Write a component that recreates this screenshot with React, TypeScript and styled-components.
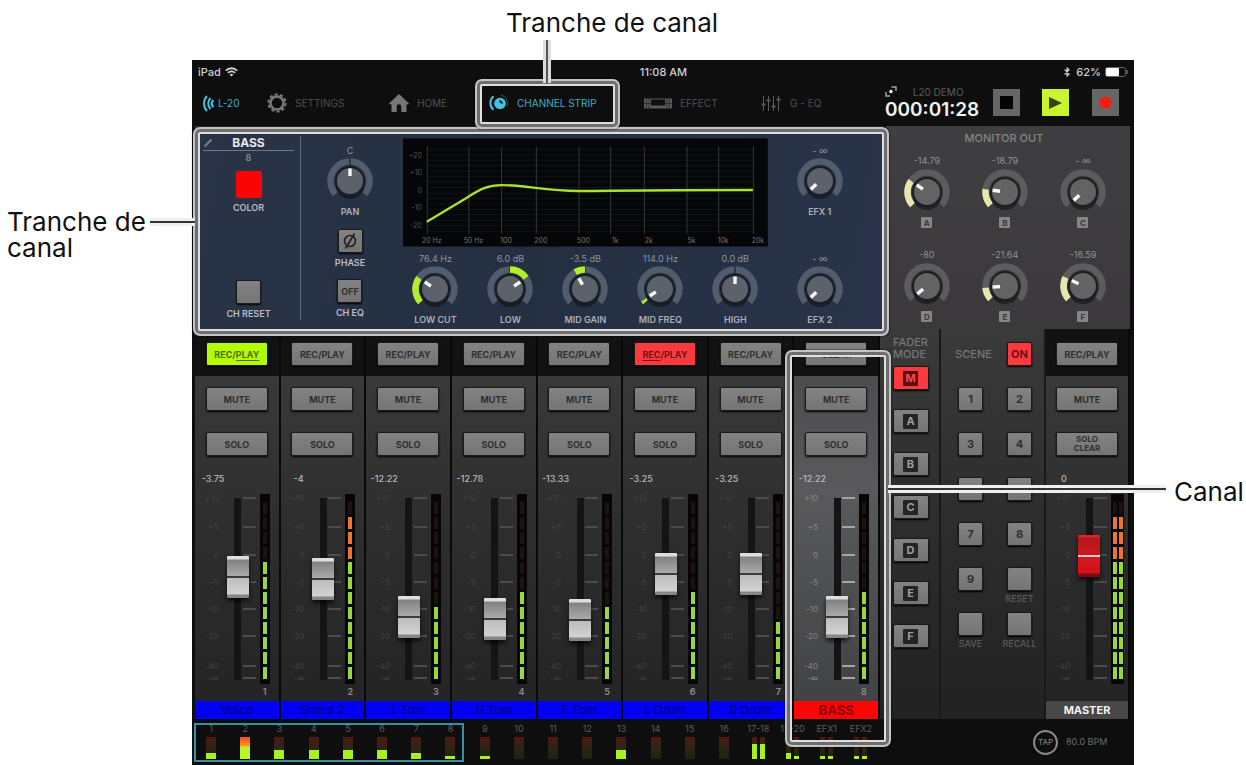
import React, { useState } from "react";
import styled, { createGlobalStyle, css } from "styled-components";
import { Bluetooth } from "lucide-react";

const Global = createGlobalStyle`
  *, *::before, *::after { box-sizing: border-box; }
  body { margin: 0; background: #fff; font-family: Inter, "Liberation Sans", sans-serif; }
  button, input { font-family: inherit; margin: 0; padding: 0; }
  p, h1, h2, h3, figure { margin: 0; font-weight: inherit; font-size: inherit; }
`;

/* ---------- figure with captions ---------- */

const Figure = styled.figure`
  display: grid;
  grid-template-columns: 192px minmax(0, 1fr) 112px;
  grid-template-rows: 60px auto;
  color: #111;
  overflow: hidden;
`;
const Caption = styled.p`
  font-size: 26px;
  line-height: 26px;
`;
const TopCaption = styled(Caption)`
  grid-column: 2;
  padding: 10px 0 0 314px;
  white-space: nowrap;
`;
const LeftCaption = styled(Caption)`
  grid-column: 1;
  grid-row: 2;
  padding: 149px 0 0 7px;
`;
const RightCaption = styled(Caption)`
  grid-column: 3;
  grid-row: 2;
  padding: 419px 0 0 40px;
`;

const Highlight = styled.span<{ $inset: string }>`
  position: absolute;
  inset: ${(p) => p.$inset};
  border: 2px solid #c4c4c4;
  border-radius: 7px;
  box-shadow: inset 0 0 0 3px #6e6e6e, inset 0 0 0 5px #dedede, 0 0 2px #000;
  pointer-events: none;
  z-index: 3;
`;
const Leader = styled.span<{ $inset: string; $vertical?: boolean }>`
  position: absolute;
  inset: ${(p) => p.$inset};
  ${(p) =>
    p.$vertical
      ? css`
          width: 8px;
          background: linear-gradient(90deg, #dcdcdc 3px, #555 3px 5px, #dcdcdc 5px);
        `
      : css`
          height: 8px;
          background: linear-gradient(#f0f0f0 3px, #333 3px 5px, #f0f0f0 5px);
        `}
  z-index: 4;
`;

/* ---------- tablet ---------- */

const Tablet = styled.div`
  grid-column: 2;
  grid-row: 2;
  background: #0e0e0f;
  color: #8a8a8a;
  font-size: 10px;
  line-height: 12px;
`;
const StatusBar = styled.div`
  display: grid;
  grid-template-columns: 1fr auto 1fr;
  align-items: center;
  height: 23px;
  padding: 0 5px 0 6px;
  font-size: 11px;
  font-weight: 500;
  color: #d0d0d0;
`;
const StatusGroup = styled.div<{ $end?: boolean }>`
  display: flex;
  align-items: center;
  gap: 4px;
  justify-content: ${(p) => (p.$end ? "flex-end" : "flex-start")};
`;
const Nav = styled.nav`
  display: grid;
  grid-template-columns: 64fr 122fr 100fr 155fr 116fr 125fr 108fr 49fr 50fr 42fr;
  align-items: center;
  height: 43px;
  padding-left: 11px;
`;
const NavLink = styled.a<{ $active?: boolean; $dim?: boolean }>`
  position: relative;
  display: flex;
  align-items: center;
  gap: 8px;
  height: 38px;
  padding-bottom: 3px;
  font-size: 10px;
  text-decoration: none;
  white-space: nowrap;
  color: ${(p) => (p.$active ? "#3fb0c8" : "#505050")};
  svg { color: ${(p) => (p.$active ? "#46c3dc" : p.$dim ? "#5a5a5a" : "#777")}; }
`;
const HomeLinkNear = styled(NavLink)`
  gap: 4px;
`;
const Clock = styled.div`
  display: grid;
  grid-template-columns: auto auto;
  justify-content: space-between;
  align-items: center;
  row-gap: 2px;
  width: 94px;
  padding-bottom: 4px;
  font-size: 10px;
  color: #5c5c5c;
`;
const Time = styled.strong`
  grid-column: 1 / 3;
  font-size: 19px;
  line-height: 20px;
  font-weight: 600;
  color: #f2f2f2;
`;
const Transport = styled.button<{ $lit?: boolean }>`
  display: flex;
  align-items: center;
  justify-content: center;
  width: 27px;
  height: 27px;
  margin-bottom: 4px;
  border: 0;
  background: ${(p) => (p.$lit ? "#c8f52f" : "#666")};
`;

/* ---------- shared controls ---------- */

type Tone = "grey" | "lime" | "red";
const tones: Record<Tone, string> = {
  grey: "linear-gradient(#838383, #747474)",
  lime: "#b4fb07",
  red: "#fb3a40",
};
const PadButton = styled.button<{ $tone?: Tone; $w?: number; $small?: boolean }>`
  display: flex;
  align-items: center;
  justify-content: center;
  flex: none;
  width: ${(p) => p.$w ?? 62}px;
  height: 24px;
  border: 1px solid #1a1a1a;
  border-radius: 2px;
  background: ${(p) => tones[p.$tone ?? "grey"]};
  box-shadow: 0 1px 2px #000;
  color: ${(p) => (p.$tone === "red" ? "#6d1216" : p.$tone === "lime" ? "#4f7005" : "#303030")};
  font-size: ${(p) => (p.$small ? 8 : 9)}px;
  line-height: 9px;
  font-weight: 700;
`;
const SquareButton = styled(PadButton)`
  font-size: 11px;
  width: 25px;
`;

const KnobUnit = styled.label<{ $spread?: boolean }>`
  display: flex;
  flex-direction: column;
  align-items: center;
  gap: ${(p) => (p.$spread ? 1 : 0)}px;
  position: relative;
  color: #8d939c;
  white-space: nowrap;
`;
const KnobValue = styled.span`
  font-size: 9px;
  line-height: 12px;
`;
const KnobName = styled.span`
  font-size: 9px;
  line-height: 13px;
  font-weight: 600;
  color: #a9afb8;
`;
const KnobInput = styled.input`
  position: absolute;
  inset: 12px 0 12px;
  width: 100%;
  opacity: 0;
  cursor: pointer;
`;
const Badge = styled.span<{ $dark?: boolean }>`
  display: flex;
  align-items: center;
  justify-content: center;
  width: ${(p) => (p.$dark ? 15 : 11)}px;
  height: ${(p) => (p.$dark ? 15 : 11)}px;
  border-radius: 1px;
  background: ${(p) => (p.$dark ? "#242424" : "#858585")};
  color: ${(p) => (p.$dark ? "#9c9c9c" : "#3a3a3a")};
  font-size: ${(p) => (p.$dark ? 11 : 8)}px;
  font-weight: 700;
`;
const ModeBadge = styled(Badge)<{ $on?: boolean }>`
  background: ${(p) => (p.$on ? "#5c0f12" : "#242424")};
  color: ${(p) => (p.$on ? "#ff4a50" : "#9c9c9c")};
`;

function point(r: number, deg: number) {
  const a = ((deg - 90) * Math.PI) / 180;
  return `${(24 + r * Math.cos(a)).toFixed(2)} ${(24 + r * Math.sin(a)).toFixed(2)}`;
}
function arc(r: number, from: number, to: number) {
  return `M${point(r, from)} A${r} ${r} 0 ${to - from > 180 ? 1 : 0} 1 ${point(r, to)}`;
}

interface KnobProps {
  name: string;
  value: string;
  angle: number;
  origin?: number;
  monitor?: boolean;
}
function Knob({ name, value, angle, origin = -132, monitor }: KnobProps) {
  const [turn, setTurn] = useState(angle);
  const lo = Math.min(origin, turn);
  const hi = Math.max(origin, turn);
  return (
    <KnobUnit $spread={monitor}>
      <KnobValue>{value}</KnobValue>
      <svg width="48" height="48" viewBox="0 0 48 48">
        <path d={arc(19.5, -132, 132)} fill="none" stroke={monitor ? "#5c5c5e" : "#515c6c"} strokeWidth="6.5" />
        {origin === 0 && <path d="M24 1v8" stroke="#202a3a" strokeWidth="1.5" />}
        {hi - lo > 3 && (
          <path d={arc(19.5, lo, hi)} fill="none" stroke={monitor ? "#e6e6ae" : "#b3ee2c"} strokeWidth="6.5" />
        )}
        <ellipse cx="24" cy="29" rx="14" ry="13" fill="#0c0e12" opacity=".55" />
        <circle cx="24" cy="24" r="14" fill={monitor ? "#636363" : "#5b626c"} stroke="#1b1e24" strokeWidth="2" />
        <path d="M24 11.5v7.5" stroke="#f6f6f6" strokeWidth="3.4" transform={`rotate(${turn} 24 24)`} />
      </svg>
      {monitor ? <Badge>{name}</Badge> : <KnobName>{name}</KnobName>}
      <KnobInput
        type="range"
        min={-132}
        max={132}
        value={turn}
        aria-label={name}
        onChange={(e) => setTurn(Number(e.target.value))}
      />
    </KnobUnit>
  );
}

/* ---------- channel strip panel ---------- */

const Upper = styled.div`
  display: grid;
  grid-template-columns: 690fr 245fr;
  gap: 3px;
  padding: 0 4px 0 3px;
  height: 203px;
`;
const Strip = styled.section`
  position: relative;
  z-index: 2;
  display: grid;
  grid-template-columns: 106px 102px minmax(0, 1fr) 100px 15px;
  background: linear-gradient(100deg, #2a3447, #252f42 50%, #29344a);
`;
const IdentityColumn = styled.div`
  display: flex;
  flex-direction: column;
  align-items: center;
  margin: 10px 0 9px;
  padding: 0 6px 0 8px;
  border-right: 1px solid #626a78;
`;
const StripTitle = styled.h2`
  display: grid;
  grid-template-columns: 10px 1fr 10px;
  align-items: center;
  width: 100%;
  padding-bottom: 1px;
  border-bottom: 1px solid #707886;
  font-size: 12px;
  line-height: 13px;
  font-weight: 700;
  text-align: center;
  color: #e6e8ec;
`;
const StripNumber = styled.span`
  line-height: 14px;
  font-size: 9px;
  font-weight: 600;
`;
const Swatch = styled.button`
  width: 26px;
  height: 27px;
  margin-top: 6px;
  border: 0;
  border-radius: 2px;
  background: #fd0404;
`;
const ControlLabel = styled.span`
  margin-top: 3px;
  font-size: 9px;
  line-height: 13px;
  font-weight: 600;
  color: #b9bec7;
`;
const Push = styled.div`
  display: flex;
  flex-direction: column;
  align-items: center;
  margin-top: auto;
`;
const PanColumn = styled.div`
  display: flex;
  flex-direction: column;
  align-items: center;
  padding: 19px 4px 10px 0;
`;
const EqColumn = styled.div`
  padding-top: 12px;
  svg { display: block; }
`;
const EqKnobs = styled.div`
  display: grid;
  grid-template-columns: repeat(5, 1fr);
  margin: 6px -5px 0;
`;
const EfxColumn = styled.div`
  display: flex;
  flex-direction: column;
  align-items: center;
  gap: 35px;
  padding: 19px 0 0 4px;
`;

const freqs: [number, string][] = [
  [24, "20 Hz"], [66, "50 Hz"], [99, "100"], [134, "200"], [177, "500"],
  [209, "1k"], [243, "2k"], [286, "5k"], [318, "10k"], [353, "20k"],
];
const gains: [number, string][] = [[17, "+20"], [34, "+10"], [52, "0"], [69, "-10"], [87, "-20"]];

function EqGraph() {
  return (
    <svg width="100%" height="109" viewBox="0 0 368 109">
      <rect width="368" height="109" fill="#050607" />
      {Array.from({ length: 16 }, (_, i) => (
        <path key={i} d={`M24 ${11 + i * 5.5}H353`} stroke="#121415" strokeWidth="1" />
      ))}
      {freqs.map(([x, t]) => (
        <g key={t}>
          <path d={`M${x}.5 8V96`} stroke="#33373a" />
          <text x={x + 5} y="105" fontSize="7" fill="#747474" textAnchor="middle">{t}</text>
        </g>
      ))}
      {gains.map(([y, t]) => (
        <text key={t} x="19" y={y + 3} fontSize="7" fill="#525252" textAnchor="end">{t}</text>
      ))}
      <path
        d="M24 84 L64 60 C78 51 86 47 99 47 C122 47 145 53 177 53 C210 53 230 52 353 52"
        fill="none"
        stroke="#a8e22f"
        strokeWidth="2.4"
      />
    </svg>
  );
}

/* ---------- monitor out ---------- */

const Monitor = styled.section`
  padding: 5px 8px 0 0;
  background: linear-gradient(#3f3e40, #3b393b);
`;
const MonitorTitle = styled.h2`
  font-size: 11px;
  line-height: 14px;
  font-weight: 500;
  text-align: center;
  color: #858585;
`;
const MonitorGrid = styled.div`
  display: grid;
  grid-template-columns: repeat(3, 1fr);
  row-gap: 21px;
  margin-top: 10px;
  padding-left: 2px;
`;

/* ---------- mixer ---------- */

const Mixer = styled.div`
  display: grid;
  grid-template-columns: minmax(0, 685fr) minmax(0, 61fr) minmax(0, 105fr) minmax(0, 84fr);
  height: 390px;
  padding: 0 4px 0 3px;
`;
const Lanes = styled.div`
  display: grid;
  grid-template-columns: repeat(8, minmax(0, 1fr));
`;
const Lane = styled.section<{ $selected?: boolean }>`
  position: relative;
  display: flex;
  flex-direction: column;
  min-width: 0;
  border-right: 2px solid #090909;
  --tick: ${(p) => (p.$selected ? "#a5a5a5" : "#4c4c4c")};
  --scale: ${(p) => (p.$selected ? "#858585" : "#414141")};
  --body: ${(p) =>
    p.$selected ? "linear-gradient(#4c4c4e, #5a5a5d 35%, #404243)" : "linear-gradient(#39393a, #2e2e2f 45%, #242425)"};
`;
const LaneHead = styled.div`
  display: flex;
  justify-content: center;
  height: 47px;
  padding-top: 13px;
  background: #121213;
`;
const LaneBody = styled.div`
  display: flex;
  flex-direction: column;
  align-items: center;
  gap: 21px;
  height: 325px;
  padding-top: 11px;
  background: var(--body);
`;
const FaderGrid = styled.div<{ $wide?: boolean }>`
  align-self: stretch;
  display: grid;
  grid-template-columns: minmax(0, 1fr) 22px 11px ${(p) => (p.$wide ? "13px 4px" : "10px 9px")};
`;
const ScaleColumn = styled.div`
  display: flex;
  flex-direction: column;
  margin-top: -4px;
`;
const Level = styled.output`
  width: 36px;
  margin-bottom: 7px;
  text-align: center;
  font-size: 9px;
  line-height: 12px;
  font-weight: 500;
  color: #b9b9b9;
  white-space: nowrap;
`;
const scaleRows = "29px 28px 27px 27px 27px 30px 12px 12px";
const ScaleLabels = styled.div`
  display: grid;
  grid-template-rows: ${scaleRows};
  padding-right: 8px;
  font-size: 8px;
  line-height: 12px;
  text-align: right;
  color: var(--scale);
`;
const Ticks = styled.div`
  display: grid;
  grid-template-rows: ${scaleRows};
  margin: 15px 4px 0 -6px;
`;
const Tick = styled.span`
  height: 2px;
  margin-top: 5px;
  background: var(--tick);
`;
const FaderInput = styled.input<{ $master?: boolean }>`
  appearance: none;
  writing-mode: vertical-lr;
  direction: rtl;
  position: relative;
  z-index: 1;
  width: 22px;
  height: 223px;
  background: linear-gradient(#141415, #141415) center / 7px 182px no-repeat;
  &::-webkit-slider-runnable-track { width: 22px; height: 100%; background: none; }
  &::-webkit-slider-thumb {
    appearance: none;
    width: 22px;
    height: 42px;
    border-radius: 1px;
    box-shadow: 0 3px 4px rgba(0, 0, 0, 0.7);
    background: ${(p) =>
      p.$master
        ? "linear-gradient(#d8262a 2px, #b5161b 3px, #c9181d 20px, #f3d0d0 20px 22px, #d8171c 22px, #cf1318 38px, #7d0c10 39px)"
        : "linear-gradient(#dedede 3px, #828282 4px, #a9a9a9 20px, #3c3c3c 20px 22px, #bdbdbd 22px, #d2d2d2 38px, #868686 39px)"};
  }
`;
const MeterColumn = styled.div`
  display: flex;
  flex-direction: column;
  align-items: center;
  padding-top: 17px;
  font-size: 9px;
  line-height: 15px;
  font-weight: 600;
  color: #8e8e8e;
`;
const MeterWell = styled.div`
  display: flex;
  justify-content: center;
  gap: 2px;
  width: 100%;
  height: 190px;
  padding: 5px 0;
  background: #060606;
`;
const MeterBar = styled.div`
  display: flex;
  flex-direction: column-reverse;
  gap: 3px;
  width: 4px;
`;
const Segment = styled.span<{ $kind: "green" | "orange" | "off" }>`
  flex: none;
  height: 12px;
  background: ${(p) => (p.$kind === "green" ? "#98d838" : p.$kind === "orange" ? "#ee7433" : "#1f110c")};
`;
const LaneName = styled.div<{ $bg: string; $fg: string }>`
  height: 18px;
  font-size: 12px;
  line-height: 18px;
  font-weight: 600;
  text-align: center;
  white-space: nowrap;
  background: ${(p) => p.$bg};
  color: ${(p) => p.$fg};
`;
const MasterName = styled(LaneName)`
  font-size: 11px;
  font-weight: 700;
`;
const SelectedName = styled(LaneName)`
  font-size: 13px;
  font-weight: 700;
`;
const Underlined = styled.span`
  text-decoration: underline;
  text-underline-offset: 2px;
`;

function Meter({ lit }: { lit: number }) {
  return (
    <MeterBar>
      {Array.from({ length: 12 }, (_, i) => (
        <Segment key={i} $kind={i >= lit ? "off" : i < 8 ? "green" : "orange"} />
      ))}
    </MeterBar>
  );
}

interface LaneData {
  id: number;
  name: string;
  level: string;
  pos: number;
  lit: number;
  rec?: "play" | "rec" | "clear";
}
const lanes: LaneData[] = [
  { id: 1, name: "Voice", level: "-3.75", pos: 564, lit: 8, rec: "play" },
  { id: 2, name: "Snare 2", level: "-4", pos: 553, lit: 11 },
  { id: 3, name: "L Tom", level: "-12.22", pos: 343, lit: 5 },
  { id: 4, name: "H Tom", level: "-12.78", pos: 331, lit: 6 },
  { id: 5, name: "F Tom", level: "-13.33", pos: 326, lit: 5 },
  { id: 6, name: "L Drum", level: "-3.25", pos: 580, lit: 6, rec: "rec" },
  { id: 7, name: "R Drum", level: "-3.25", pos: 580, lit: 4 },
  { id: 8, name: "BASS", level: "-12.22", pos: 343, lit: 6, rec: "clear" },
];
const scale = ["+10", "+5", "0", "-5", "-10", "-20", "-40", "-∞"];

function Fader({ level, pos, lit, id }: { level: string; pos: number; lit: number; id?: number }) {
  const [at, setAt] = useState(pos);
  return (
    <FaderGrid $wide={!id}>
      <ScaleColumn>
        <Level>{level}</Level>
        <ScaleLabels>{scale.map((s) => <span key={s}>{s}</span>)}</ScaleLabels>
      </ScaleColumn>
      <FaderInput
        type="range"
        min={0}
        max={1000}
        value={at}
        $master={!id}
        aria-label={id ? `Fader ${id}` : "Master fader"}
        onChange={(e) => setAt(Number(e.target.value))}
      />
      <Ticks>{scale.map((s) => <Tick key={s} />)}</Ticks>
      <MeterColumn>
        <MeterWell>
          <Meter lit={lit} />
          {!id && <Meter lit={lit} />}
        </MeterWell>
        {id}
      </MeterColumn>
    </FaderGrid>
  );
}

function RecButton({ mode }: { mode?: LaneData["rec"] }) {
  if (mode === "play") return <PadButton $tone="lime">REC/<Underlined>PLAY</Underlined></PadButton>;
  if (mode === "rec") return <PadButton $tone="red"><Underlined>REC</Underlined>/PLAY</PadButton>;
  if (mode === "clear") return <PadButton>CLEAR</PadButton>;
  return <PadButton>REC/PLAY</PadButton>;
}

const SideColumn = styled.section`
  position: relative;
  display: flex;
  flex-direction: column;
  align-items: center;
  border-right: 2px solid #191919;
  background: linear-gradient(#3a3a3b, #2e2e2f 45%, #222223);
  color: #777;
`;
const SideTitle = styled.h3`
  font-size: 11px;
  line-height: 12px;
  font-weight: 500;
`;
const ModeList = styled.div`
  display: flex;
  flex-direction: column;
  gap: 19px;
  padding-top: 6px;
`;
const FaderMode = styled(SideColumn)`
  padding: 7px 0 0 2px;
`;
const SceneColumn = styled(SideColumn)`
  padding: 13px 0 0 5px;
`;
const SceneGrid = styled.div`
  display: grid;
  grid-template-columns: 49px 49px;
  grid-auto-rows: 45px;
  justify-items: center;
`;
const SceneCell = styled.div`
  display: flex;
  flex-direction: column;
  align-items: center;
  gap: 2px;
  font-size: 9px;
  font-weight: 500;
  color: #5c5c5c;
`;
const SceneTitle = styled(SideTitle)`
  padding: 6px 0 0 6px;
`;

/* ---------- bottom overview ---------- */

const Bottom = styled.footer`
  display: grid;
  grid-template-columns: 684fr 256fr;
  height: 46px;
  padding-left: 2px;
`;
const Overview = styled.div`
  position: relative;
  display: grid;
  grid-template-columns: repeat(20, minmax(0, 1fr));
  padding-top: 4px;
`;
const BankFrame = styled.span`
  grid-column: 1 / 9;
  grid-row: 1;
  height: 39px;
  margin-right: 4px;
  border: 2px solid #3a8fa6;
`;
const MiniCell = styled.div<{ $col: number }>`
  grid-column: ${(p) => p.$col};
  grid-row: 1;
  display: flex;
  flex-direction: column;
  align-items: center;
  gap: 2px;
  font-size: 9px;
  line-height: 12px;
  color: #5e5e5e;
  white-space: nowrap;
`;
const MiniBars = styled.div`
  display: flex;
  gap: 3px;
`;
const MiniBar = styled.span<{ $w: number }>`
  display: flex;
  flex-direction: column;
  justify-content: flex-end;
  width: ${(p) => p.$w}px;
  height: 22px;
  background: linear-gradient(#4e1a15, #2e2412 50%, #17260f);
`;
const MiniFill = styled.span<{ $h: number }>`
  height: ${(p) => p.$h}px;
  background: ${(p) => (p.$h > 20 ? "linear-gradient(#ff4a16, #ff9a20 9px, #b9f527 10px)" : "#a8f01e")};
`;
const TapArea = styled.div`
  display: flex;
  align-items: center;
  gap: 8px;
  padding-left: 155px;
  font-size: 9px;
  color: #6c6c6c;
  white-space: nowrap;
`;
const TapButton = styled.button`
  width: 25px;
  height: 25px;
  border: 2px solid #8a8a8a;
  border-radius: 50%;
  background: none;
  color: #8a8a8a;
  font-size: 8px;
  line-height: 20px;
`;
const minis: [string, number[]][] = [
  ["1", [6]], ["2", [22]], ["3", [9]], ["4", [9]], ["5", [9]], ["6", [9]], ["7", [6]], ["8", [3]],
  ["9", [3]], ["10", [0]], ["11", [0]], ["12", [0]], ["13", [9]], ["14", [0]], ["15", [0]], ["16", [0]],
  ["17-18", [15, 15]], ["19-20", [6, 3]], ["EFX1", [3, 3]], ["EFX2", [3, 3]],
];

/* ---------- icons ---------- */

const WifiIcon = () => (
  <svg width="13" height="10" viewBox="0 0 13 10" fill="none" stroke="currentColor" strokeWidth="1.9">
    <path d="M.8 3.6a8.2 8.2 0 0 1 11.4 0M2.9 5.9a5.2 5.2 0 0 1 7.2 0" />
    <path d="M6.5 9.6 4.6 7.6a2.8 2.8 0 0 1 3.8 0z" fill="currentColor" stroke="none" />
  </svg>
);
const BatteryIcon = () => (
  <svg width="24" height="10" viewBox="0 0 24 10">
    <rect x=".5" y=".5" width="20" height="9" rx="2" fill="none" stroke="#666" />
    <rect x="1" y="1" width="13" height="8" rx="1" fill="#fff" />
    <path d="M22 3v4" stroke="#666" strokeWidth="1.5" />
  </svg>
);
const LinkIcon = () => (
  <svg width="11" height="17" viewBox="0 0 11 17" fill="none" stroke="currentColor">
    <path d="M4 1C0 5 0 12 4 16" strokeWidth="2" />
    <path d="M7.500 3c-3 3-3 8 0 11" strokeWidth="2" />
    <path d="M10.500 5c-2.500 2-2.500 5 0 7" strokeWidth="2.200" />
  </svg>
);
const GearIcon = () => (
  <svg width="20" height="20" viewBox="0 0 20 20" fill="none" stroke="currentColor">
    <circle cx="10" cy="10" r="6.500" strokeWidth="2.600" />
    <circle cx="10" cy="10" r="8.600" strokeWidth="2" strokeDasharray="3.2 2.204" />
  </svg>
);
const HomeIcon = () => (
  <svg width="20" height="18" viewBox="0 0 20 18" fill="currentColor">
    <path d="M10 0 20 9.500 18.800 10.800 17.500 9.700V18H12.300V12.500a2.300 2.300 0 0 0-4.600 0V18H2.500V9.700L1.200 10.800 0 9.500z" />
  </svg>
);
const StripIcon = () => (
  <svg width="20" height="18" viewBox="0 0 20 18" fill="none">
    <path d="M4.500 2.200a9 9 0 0 0 0 13.600" stroke="currentColor" strokeWidth="2" />
    <circle cx="11" cy="9.500" r="5.800" fill="currentColor" />
    <path d="M10.500 6.500 13.500 9.500" stroke="#0d2a33" strokeWidth="2" />
    <path d="M12 1a8.500 8.500 0 0 1 6 11" stroke="#1d6575" strokeWidth="1" />
  </svg>
);
const EffectIcon = () => (
  <svg width="28" height="11" viewBox="0 0 28 11" fill="none" stroke="currentColor">
    <path d="M0 .5h7v10H0zM21 .5h7v10H21z" fill="currentColor" stroke="none" />
    <path d="M2.500 0v11M5 0v11M23 0v11M25.500 0v11M0 5.500h7M21 5.500h7" stroke="#1c1c1c" strokeWidth=".6" />
    <path d="M7 1h14" strokeWidth="1" />
    <path d="M7 9h14" strokeWidth="3" />
  </svg>
);
const SlidersIcon = () => (
  <svg width="22" height="15" viewBox="0 0 22 15" fill="none" stroke="currentColor">
    <path d="M3.500 0v15M8.500 0v15M13.500 0v15M18.500 0v15" />
    <path d="M1.500 8.500h4M6.500 4.500h4M11.500 10.500h4M16.500 3.500h4" strokeWidth="1.800" />
  </svg>
);
const SyncIcon = () => (
  <svg width="12" height="11" viewBox="0 0 12 11" fill="none" stroke="#a8a8a8" strokeWidth="1.400">
    <path d="M6.500 1H11V5M5 10H1V6" />
    <circle cx="6" cy="5.500" r="1.700" fill="#fff" stroke="none" />
  </svg>
);
const PencilIcon = () => (
  <svg width="10" height="10" viewBox="0 0 10 10" stroke="#77818f" strokeWidth="2">
    <path d="M1.500 8.500 8.500 1.500" />
  </svg>
);
const PhaseIcon = () => (
  <svg width="16" height="18" viewBox="0 0 16 18" fill="none" stroke="#222" strokeWidth="1.700">
    <circle cx="8" cy="9" r="5.500" />
    <path d="M12.500 1.500 3.500 16.500" />
  </svg>
);

export default function App() {
  return (
    <>
      <Global />
      <Figure>
        <TopCaption>Tranche de canal</TopCaption>
        <LeftCaption>Tranche de canal</LeftCaption>
        <Tablet>
          <StatusBar>
            <StatusGroup>iPad <WifiIcon /></StatusGroup>
            <span>11:08 AM</span>
            <StatusGroup $end>
              <Bluetooth size={10} strokeWidth={3} />
              62%
              <BatteryIcon />
            </StatusGroup>
          </StatusBar>

          <Nav>
            <HomeLinkNear href="#l20" $active><LinkIcon />L-20</HomeLinkNear>
            <NavLink href="#settings"><GearIcon />SETTINGS</NavLink>
            <NavLink href="#home"><HomeIcon />HOME</NavLink>
            <NavLink href="#strip" $active>
              <StripIcon />CHANNEL STRIP
              <Highlight $inset="-7px 24px -5px -14px" />
              <Leader $vertical $inset="-46px auto auto 54px" style={{ height: 43 }} />
            </NavLink>
            <NavLink href="#effect" $dim><EffectIcon />EFFECT</NavLink>
            <NavLink href="#geq" $dim><SlidersIcon />G - EQ</NavLink>
            <Clock>
              <SyncIcon />
              <span>L20 DEMO</span>
              <Time>000:01:28</Time>
            </Clock>
            <Transport aria-label="Stop">
              <svg width="13" height="13"><rect width="13" height="13" fill="#050505" /></svg>
            </Transport>
            <Transport $lit aria-label="Play">
              <svg width="13" height="12"><path d="M0 0 13 6 0 12z" fill="#35450a" /></svg>
            </Transport>
            <Transport aria-label="Record">
              <svg width="13" height="13"><circle cx="6.500" cy="6.500" r="6" fill="#fb1a10" /></svg>
            </Transport>
          </Nav>

          <Upper>
            <Strip>
              <IdentityColumn>
                <StripTitle><PencilIcon />BASS</StripTitle>
                <StripNumber>8</StripNumber>
                <Swatch aria-label="Color" />
                <ControlLabel>COLOR</ControlLabel>
                <Push>
                  <SquareButton aria-label="Channel reset" />
                  <ControlLabel>CH RESET</ControlLabel>
                </Push>
              </IdentityColumn>
              <PanColumn>
                <Knob name="PAN" value="C" angle={0} origin={0} />
                <Push>
                  <SquareButton aria-label="Phase"><PhaseIcon /></SquareButton>
                  <ControlLabel>PHASE</ControlLabel>
                </Push>
                <Push>
                  <PadButton $w={25}>OFF</PadButton>
                  <ControlLabel>CH EQ</ControlLabel>
                </Push>
              </PanColumn>
              <EqColumn>
                <EqGraph />
                <EqKnobs>
                  <Knob name="LOW CUT" value="76.4 Hz" angle={-55} />
                  <Knob name="LOW" value="6.0 dB" angle={55} origin={0} />
                  <Knob name="MID GAIN" value="-3.5 dB" angle={-30} origin={0} />
                  <Knob name="MID FREQ" value="114.0 Hz" angle={-124} />
                  <Knob name="HIGH" value="0.0 dB" angle={0} origin={0} />
                </EqKnobs>
              </EqColumn>
              <EfxColumn>
                <Knob name="EFX 1" value="- ∞" angle={-132} />
                <Knob name="EFX 2" value="- ∞" angle={-132} />
              </EfxColumn>
              <Highlight $inset="1px -6px -7px -2px" />
              <Leader $inset="92px auto auto -45px" style={{ width: 45 }} />
            </Strip>
            <Monitor>
              <MonitorTitle>MONITOR OUT</MonitorTitle>
              <MonitorGrid>
                <Knob monitor name="A" value="-14.79" angle={-55} />
                <Knob monitor name="B" value="-18.79" angle={-82} />
                <Knob monitor name="C" value="- ∞" angle={-132} />
                <Knob monitor name="D" value="-80" angle={-129} />
                <Knob monitor name="E" value="-21.64" angle={-95} />
                <Knob monitor name="F" value="-16.59" angle={-64} />
              </MonitorGrid>
            </Monitor>
          </Upper>

          <Mixer>
            <Lanes>
              {lanes.map((l) => (
                <Lane key={l.id} $selected={l.id === 8}>
                  <LaneHead><RecButton mode={l.rec} /></LaneHead>
                  <LaneBody>
                    <PadButton>MUTE</PadButton>
                    <PadButton>SOLO</PadButton>
                    <Fader level={l.level} pos={l.pos} lit={l.lit} id={l.id} />
                  </LaneBody>
                  {l.id === 8 ? (
                    <SelectedName $bg="#fb0505" $fg="#8c0000">{l.name}</SelectedName>
                  ) : (
                    <LaneName $bg="#0000f6" $fg="#000090">{l.name}</LaneName>
                  )}
                  {l.id === 8 && <Highlight $inset="21px -13px -28px -9px" />}
                </Lane>
              ))}
            </Lanes>
            <FaderMode>
              <SideTitle>FADER<br />MODE</SideTitle>
              <ModeList>
                {["M", "A", "B", "C", "D", "E", "F"].map((m) => (
                  <PadButton key={m} $w={36} $tone={m === "M" ? "red" : "grey"}>
                    <ModeBadge $dark $on={m === "M"}>{m}</ModeBadge>
                  </PadButton>
                ))}
              </ModeList>
              <Leader $inset="156px auto auto 8px" style={{ width: 278 }} />
            </FaderMode>
            <SceneColumn>
              <SceneGrid>
                <SceneTitle>SCENE</SceneTitle>
                <SquareButton $tone="red">ON</SquareButton>
                {["1", "2", "3", "4", "5", "6", "7", "8", "9"].map((n) => (
                  <SceneCell key={n}><SquareButton>{n}</SquareButton></SceneCell>
                ))}
                {["RESET", "SAVE", "RECALL"].map((n) => (
                  <SceneCell key={n}><SquareButton aria-label={n} />{n}</SceneCell>
                ))}
              </SceneGrid>
            </SceneColumn>
            <Lane>
              <LaneHead><RecButton /></LaneHead>
              <LaneBody>
                <PadButton>MUTE</PadButton>
                <PadButton $small>SOLO<br />CLEAR</PadButton>
                <Fader level="0" pos={680} lit={11} />
              </LaneBody>
              <MasterName $bg="#484848" $fg="#f4f4f4">MASTER</MasterName>
            </Lane>
          </Mixer>

          <Bottom>
            <Overview>
              <BankFrame />
              {minis.map(([name, bars], i) => (
                <MiniCell key={name} $col={i + 1}>
                  {name}
                  <MiniBars>
                    {bars.map((h, k) => (
                      <MiniBar key={k} $w={bars.length > 1 ? 5 : 10}><MiniFill $h={h} /></MiniBar>
                    ))}
                  </MiniBars>
                </MiniCell>
              ))}
            </Overview>
            <TapArea>
              <TapButton>TAP</TapButton>
              80.0 BPM
            </TapArea>
          </Bottom>
        </Tablet>
        <RightCaption>Canal</RightCaption>
      </Figure>
    </>
  );
}
